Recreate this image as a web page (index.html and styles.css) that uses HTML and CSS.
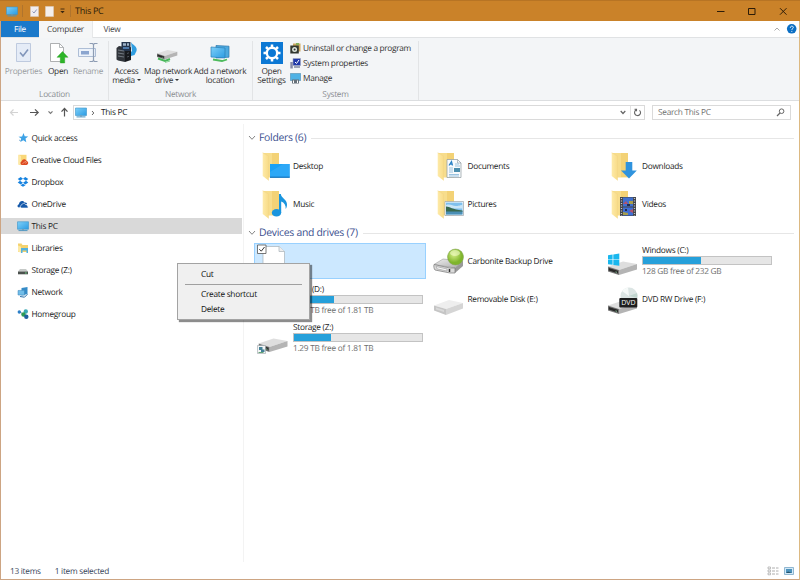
FILE: index.html
```html
<!DOCTYPE html>
<html>
  <head>
    <title>This PC</title>
    <meta charset="UTF-8">
    <link rel="stylesheet" href="styles.css">
  </head>

  <body>
    <!-- shared shapes -->
    <svg class="defs" width="0" height="0">
      <defs>
        <linearGradient id="yellow"><stop offset="0" stop-color="#feeaa8"/><stop offset="1" stop-color="#f8dc88"/></linearGradient>
        <linearGradient id="screen" x2="1" y2="1"><stop offset="0" stop-color="#7fd0f8"/><stop offset="1" stop-color="#2a9be3"/></linearGradient>
        <linearGradient id="metal" x2="1" y2="1"><stop offset="0" stop-color="#eeeeee"/><stop offset="1" stop-color="#a9a9a9"/></linearGradient>
        <radialGradient id="green" cx=".4" cy=".35"><stop offset="0" stop-color="#d5ee85"/><stop offset="1" stop-color="#7fb52c"/></radialGradient>
      </defs>
      <symbol id="pc" viewBox="0 0 12 10">
        <path d="M.5.5h11v7.500H.5z" fill="url(#screen)" stroke="#3a93c9" stroke-width=".6"/>
        <path d="M5 8h2v1H5z" fill="#7a98aa"/>
        <path d="M1.500 9.400h9" stroke="#4a94c0" stroke-width="1"/>
      </symbol>
      <symbol id="folder" viewBox="0 0 18 29">
        <path d="M1 1h16v24.500H5z" fill="#f7dd8c"/>
        <path d="M10 1h7v24h-7z" fill="#f3d276"/>
        <path d="M.7.7 6.500 4v24.500L.7 24z" fill="url(#yellow)"/>
        <path d="M.7.7 6.500 4v24.500" fill="none" stroke="#f3d584" stroke-width=".5"/>
      </symbol>
      <symbol id="drive" viewBox="0 0 30 14">
        <path d="M0 5.500 15 .5l14 2.500L11 9z" fill="#dedede"/>
        <path d="M11 9 29 3V8.500L11 14z" fill="#b4b4b4"/>
        <path d="M0 5.500 11 9v5L0 10.500z" fill="#777"/>
        <path d="M.8 7 10 9.800v2.700L.8 9.600z" fill="#292929"/>
        <path d="M7.500 10.900l1.500.5" stroke="#8dd3a0" stroke-width=".8"/>
      </symbol>
    </svg>

    <div class="window">
      <div class="titlebar">
        <svg class="title-pc" width="12" height="11"><use href="#pc" width="12" height="11"/></svg>
        <span class="title-sep"></span>
        <svg class="title-page" width="9" height="11" viewBox="0 0 9 11"><path d="M.5.5h8v10h-8z" fill="#f0edf0" stroke="#d8c9bd" stroke-width=".6"/><path d="M2.500 5.500 4 7l2.700-3.500" fill="none" stroke="#8a94b8"/></svg>
        <svg class="title-page" width="9" height="11" viewBox="0 0 9 11"><path d="M.5.5h8v10h-8z" fill="#f4efec" stroke="#dccdc0" stroke-width=".6"/></svg>
        <svg class="title-more" width="5" height="6" viewBox="0 0 5 6"><path d="M.5 1h4" stroke="#3a2710" stroke-width=".9"/><path d="M.3 3h4.400L2.500 5.300z" fill="#3a2710"/></svg>
        <span class="title-sep"></span>
        <span class="title-text">This PC</span>
        <svg class="win-buttons" width="80" height="21" viewBox="0 0 80 21" fill="none" stroke="#2d1c08"><path d="M7 10.500h7.500"/><path d="M38.500 7.500h6.500v6h-6.500z"/><path d="M70 7.200l6.500 6.500M76.500 7.200 70 13.700"/></svg>
      </div>

      <div class="tabs">
        <div class="tab file">File</div>
        <div class="tab active">Computer</div>
        <div class="tab view">View</div>
        <svg class="tab-tools" width="26" height="16" viewBox="0 0 26 16"><path d="M3.500 9.500 6 7l2.500 2.500" fill="none" stroke="#aaa"/><circle cx="20.700" cy="7.800" r="4.800" fill="#0b6fc4"/><path d="M19.300 6.800c0-2.200 3-2.200 3-.3 0 1.200-1.500 1.100-1.500 2.400M20.800 9.900v1" fill="none" stroke="#fff" stroke-width=".9"/></svg>
      </div>

      <div class="ribbon">
        <div class="group location">
          <div class="buttons">
            <div class="button properties disabled">
              <svg width="22" height="24" viewBox="0 0 22 24"><path d="M3.500 2.500h14v18h-14z" fill="#e5ecf7" stroke="#b3c0d8" stroke-width=".8"/><path d="M7 11.500l3 3.500 5-6.500" fill="none" stroke="#8095ba" stroke-width="1.600"/></svg>
              Properties
            </div>
            <div class="button open">
              <svg width="22" height="24" viewBox="0 0 22 24"><path d="M3.500 2.500h9l4 4v14h-13z" fill="#fff" stroke="#9a9da0" stroke-width=".8"/><path d="M12.500 2.500v4h4" fill="none" stroke="#9a9da0" stroke-width=".7"/><path d="M15.500 10.500l5.500 5.800h-3.300V22h-4.400v-5.700H10z" fill="#2db528" stroke="#209a1d" stroke-width=".4"/></svg>
              Open
            </div>
            <div class="button rename disabled">
              <svg width="22" height="24" viewBox="0 0 22 24" fill="none"><path d="M1.500 7.500h17v8h-17z" fill="#edf3fb" stroke="#aebed6"/><path d="M4 10h8v3.500H4z" fill="#8ba5cf"/><path d="M12.500 2.500h3l1 1 1-1h3M16.500 3.500v16M12.500 20.500h3l1-1 1 1h3" stroke="#8e9db4" stroke-width="1.200"/></svg>
              Rename
            </div>
          </div>
          <div class="group-name">Location</div>
        </div>
        <div class="group network">
          <div class="buttons">
            <div class="button media">
              <svg width="24" height="24" viewBox="0 0 24 24"><path d="M16 1c1 3 7 4 5.500 9l-2 4-3.500 1-2-2 3-3z" fill="#2f9de0"/><path d="M1.500 7 4 5l6 1v15l-7-1.500-1.500-1z" fill="#30343a"/><path d="M10 8l6-2v13l-6 2z" fill="#17191d"/><path d="M6.500 1h9v9h-9z" fill="#26364d"/><path d="M8 2.200h3v2.500H8zM12 2.200h2v2.500h-2z" fill="#a0b4c8"/><path d="M8 6h6v2H8z" fill="#4f79a8"/><path d="M3 9l6 1M3 12l6 1M3 15l6 1" stroke="#8e969f" stroke-width=".7"/><path d="M12 12.500l2-.7M12 16l2-.7" stroke="#4e545c"/></svg>
              Access<br>media <i class="arrow"></i>
            </div>
            <div class="button map">
              <svg width="24" height="24" viewBox="0 0 24 24"><use href="#drive" x="2" y="8" width="21" height="11"/><path d="M3 17.500l7 2.500 5-2" fill="none" stroke="#48b75a" stroke-width="2"/><path d="M10 21.500l5-1.500" stroke="#8bd596"/></svg>
              Map network<br>drive <i class="arrow"></i>
            </div>
            <div class="button add">
              <svg width="24" height="24" viewBox="0 0 24 24"><path d="M8 4.500l13 .7v11L8 17z" fill="#4ca9df" stroke="#2976ab" stroke-width=".7"/><path d="M3 6l14 1v10L3 16z" fill="url(#screen)" stroke="#2b80b6" stroke-width=".7"/><path d="M5 18.500l9 1.500 5-1.500" fill="none" stroke="#4dbb5d" stroke-width="1.800"/></svg>
              Add a network<br>location
            </div>
          </div>
          <div class="group-name">Network</div>
        </div>
        <div class="group system">
          <div class="buttons">
            <div class="button settings">
              <svg width="24" height="24" viewBox="0 0 24 24"><path d="M1 1h22v22H1z" fill="#0c78d4"/><circle cx="12" cy="12" r="5.200" fill="none" stroke="#fff" stroke-width="2.400"/><path d="M12 3.500v3M12 17.500v3M3.500 12h3M17.500 12h3M6 6l2.200 2.200M15.800 15.800 18 18M18 6l-2.200 2.200M8.200 15.800 6 18" stroke="#fff" stroke-width="2.500"/></svg>
              Open<br>Settings
            </div>
            <div class="links">
              <div class="link">
                <svg width="11" height="11" viewBox="0 0 11 11"><path d="M3 .5h7.500v8H3z" fill="#cba75e"/><path d="M6 0h3v2H6z" fill="#85af59"/><path d="M.3 2.500h8.500v8H.3z" fill="#32372f"/><circle cx="4.600" cy="6.500" r="2.500" fill="#dde5dc"/><circle cx="4.600" cy="6.500" r="1" fill="#333"/></svg>
                Uninstall or change a program
              </div>
              <div class="link">
                <svg width="11" height="11" viewBox="0 0 11 11"><path d="M3 .5h7.500v7H3z" fill="#2038a8" stroke="#9ea5bd" stroke-width=".6"/><path d="M5 4l1.500 1.500L9 2" fill="none" stroke="#fff"/><path d="M.3 4h2.500v6.500H.3z" fill="#8589a8"/><path d="M4 9h6" stroke="#7f87a0" stroke-width="1.500"/></svg>
                System properties
              </div>
              <div class="link">
                <svg width="11" height="11" viewBox="0 0 11 11"><path d="M.3.5h10.400v7H.3z" fill="#4fb2e5" stroke="#528bad" stroke-width=".6"/><path d="M2 6.500h7v4H2z" fill="#66717a"/><path d="M3.500 7.500v2.500M7.500 7.500v2.500" stroke="#fff"/></svg>
                Manage
              </div>
            </div>
          </div>
          <div class="group-name">System</div>
        </div>
      </div>

      <div class="address-row">
        <svg class="arrows" width="72" height="22" viewBox="0 0 72 22" fill="none" stroke="#555" stroke-width="1.200"><path d="M17 11.500H9.500M12.500 8.500l-3 3 3 3" stroke="#d3d3d3"/><path d="M29 11.500h8M34 8.300l3.200 3.200-3.200 3.200"/><path d="M47.500 10.300l2 2 2-2" stroke="#777"/><path d="M63.500 15.500v-8M60.500 10.700l3-3.200 3 3.200"/></svg>
        <div class="address">
          <svg width="12" height="11"><use href="#pc" width="12" height="11"/></svg>
          <svg class="crumb" width="4" height="6" viewBox="0 0 4 6"><path d="M1 1l1.800 2L1 5" fill="none" stroke="#666"/></svg>
          <span>This PC</span>
          <svg class="drop" width="6" height="5" viewBox="0 0 6 5"><path d="M.7 1 3 3.500 5.300 1" fill="none" stroke="#666" stroke-width="1.200"/></svg>
          <div class="refresh"><svg width="9" height="9" viewBox="0 0 9 9"><path d="M3 2A3 3 0 1 0 6.500 2.300M1.500 1.300h2v2" fill="none" stroke="#666" stroke-width="1.100"/></svg></div>
        </div>
        <div class="search">
          <span>Search This PC</span>
          <svg width="9" height="9" viewBox="0 0 9 9" fill="none" stroke="#666"><circle cx="5.600" cy="3.200" r="2.300"/><path d="M4 5 1 8" stroke-width="1.300"/></svg>
        </div>
      </div>

      <div class="body">
        <div class="nav">
          <div class="nav-item"><svg width="12" height="12" viewBox="0 0 12 12"><path d="M6.500 1l1.200 3.300 3.500.1-2.700 2.200.8 3.700-3-2-3 1.800.9-3.500L1.500 4.700l3.600-.3z" fill="#3da2e6"/><path d="M2 8l2 1" stroke="#8bb6d6"/></svg>Quick access</div>
          <div class="nav-item"><svg width="12" height="12" viewBox="0 0 12 12"><path d="M1.500.8h8v10h-8z" fill="#f9d778"/><path d="M1.500.8 4 2v9.500L1.500 10z" fill="#fde9a6"/><path d="M5 11a2 2 0 0 1-.3-3.800 2.700 2.700 0 0 1 5-.3A2.100 2.100 0 0 1 9.500 11z" fill="#dd4a21"/><path d="M5.500 9.500c1.500 0 1.500-2 3-2 1 0 1 1.800 0 1.800" fill="none" stroke="#f9ba9d" stroke-width=".7"/></svg>Creative Cloud Files</div>
          <div class="nav-item"><svg width="12" height="12" viewBox="0 0 12 12" fill="#1783e0"><path d="M3.700 1 6 2.800 3 4.800.7 3zM8.300 1 6 2.800l3 2L11.300 3zM.7 6.500 3 4.800l3 2-2.300 1.700zM11.300 6.500 9 4.800l-3 2 2.300 1.700zM3.500 9.200 6 7.700l2.500 1.500L6 10.800z"/></svg>Dropbox</div>
          <div class="nav-item"><svg width="12" height="12" viewBox="0 0 12 12"><path d="M2 9.500C0 9.500 0 6.600 2 6.300c-.2-3 3.800-4.500 5.500-1.800 2-.5 2.600.8 2.600 1.500z" fill="#1559aa"/><path d="M4.500 10c-1.800-.6-1.500-2.700.2-3 .5-2 3.200-2.200 4-.3 1.500-.2 1.800 1 1.600 1.300 1.300.3 1 2 0 2z" fill="#1559aa" stroke="#fff" stroke-width=".6"/></svg>OneDrive</div>
          <div class="nav-item selected"><svg width="12" height="12"><use href="#pc" y="1" width="12" height="10.500"/></svg>This PC</div>
          <div class="nav-item"><svg width="12" height="12" viewBox="0 0 12 12"><path d="M1 1.500h3.500l1 1.500H11v7H1z" fill="#f4d26e"/><path d="M1 3.500l3 1.200v6L1 9.500z" fill="#fce9a5"/><path d="M4 6h7v5H9.500V8.500h-4V11H4z" fill="#53b2df"/></svg>Libraries</div>
          <div class="nav-item"><svg width="12" height="12" viewBox="0 0 12 12"><path d="M3 5h6l2 2.500H1z" fill="#c5c9c7"/><path d="M1 7.500h10v2.800H1z" fill="#4b514d"/><path d="M8 9h1.800" stroke="#6ad082"/></svg>Storage (Z:)</div>
          <div class="nav-item"><svg width="12" height="12" viewBox="0 0 12 12"><path d="M4.500 2l6-1v7l-6 1.500z" fill="#358bc7"/><path d="M1 4.500l6.500-.3v5L1 9z" fill="#71bde8" stroke="#3883b8" stroke-width=".5"/><path d="M3 10.500l4.500.7 3-3" fill="none" stroke="#2b6fa7"/></svg>Network</div>
          <div class="nav-item"><svg width="12" height="12" viewBox="0 0 12 12"><path d="M2.500 4l4 2L9 3.500" fill="none" stroke="#789"/><circle cx="2.300" cy="4" r="1.700" fill="#2c7fc8"/><circle cx="8.800" cy="3.500" r="2.200" fill="#3ba9b4"/><circle cx="6.500" cy="6.500" r="2.200" fill="#2c9a55"/><circle cx="9.300" cy="8.700" r="2.200" fill="#1d5f9f"/></svg>Homegroup</div>
        </div>

        <div class="content">
          <div class="heading"><svg width="8" height="6" viewBox="0 0 8 6"><path d="M1 1l3 3.300L7 1" fill="none" stroke="#777" stroke-width=".9"/></svg>Folders (6)<span class="rule"></span></div>
          <div class="tiles folders">
            <div class="tile">
              <svg width="39" height="36" viewBox="0 0 39 36"><use href="#folder" x="8" y="4" width="18" height="29"/><path d="M16 16h19.700v13.500H16z" fill="#1ba1f5"/><path d="M16 24l13-8h6.700v13.500H16z" fill="#3aaef8" opacity=".6"/><path d="M16 29.200h19.700" stroke="#0d69b4"/></svg>
              <div class="name">Desktop</div>
            </div>
            <div class="tile">
              <svg width="39" height="36" viewBox="0 0 39 36"><use href="#folder" x="8" y="4" width="18" height="29"/><path d="M18 11.500h10.500L32 15v14.500H18z" fill="#f8fafc" stroke="#8e999f" stroke-width=".7"/><path d="M28.500 11.500V15H32" fill="none" stroke="#8e999f" stroke-width=".6"/><path d="M20 17.500l2.500-4 1 4M21 16.200h2" fill="none" stroke="#2b82c6" stroke-width="1.200"/><path d="M20 20h4M20 22h4M20 24h4M20 26.500h10M20 28h10M26 16h4M26 18h5" stroke="#83b5d8" stroke-width=".8"/><path d="M25 20h6v4h-6z" fill="#4b8dac"/></svg>
              <div class="name">Documents</div>
            </div>
            <div class="tile">
              <svg width="39" height="36" viewBox="0 0 39 36"><use href="#folder" x="8" y="4" width="18" height="29"/><path d="M22.700 14h6.600v8.500h4.500L26 30.500l-8-8h4.700z" fill="#2f93de"/></svg>
              <div class="name">Downloads</div>
            </div>
            <div class="tile">
              <svg width="39" height="36" viewBox="0 0 39 36"><use href="#folder" x="8" y="4" width="18" height="29"/><ellipse cx="22.500" cy="26.800" rx="4.700" ry="3.700" fill="#1995df"/><path d="M25 8h1.800c.5 4 6.200 5.500 6.200 10.500 0 2-.7 3.500-1.300 4.500.3-4-1.500-6.500-4.500-7.500v11.500H25z" fill="#1995df"/></svg>
              <div class="name">Music</div>
            </div>
            <div class="tile">
              <svg width="39" height="36" viewBox="0 0 39 36"><use href="#folder" x="8" y="4" width="18" height="29"/><path d="M16 15.500h18.500v14H16z" fill="#fff" stroke="#9aa4ab" stroke-width=".7"/><path d="M17 16.500h16.500v12H17z" fill="#7fc0ee"/><path d="M17 19c5-1.500 6 1 10 1s4-1 6.500-1v3.500H17z" fill="#c9e5f7"/><path d="M17 20.500c4 0 6 3 16.500 4v1.500H17z" fill="#38694f"/><path d="M17 25.500h16.500v3H17z" fill="#4a8fb5"/></svg>
              <div class="name">Pictures</div>
            </div>
            <div class="tile">
              <svg width="39" height="36" viewBox="0 0 39 36"><use href="#folder" x="8" y="4" width="18" height="29"/><path d="M17 11h16v19H17z" fill="#43454b"/><path d="M20 11.500h10v9H20z" fill="#3f70d0"/><path d="M20 21.500h10v8H20z" fill="#3f6fd5"/><path d="M18.500 12v18M31.500 12v18" stroke="#c3c6c9" stroke-width="1.300" stroke-dasharray="1 1.500"/><path d="M20 18l3-3 2 3M26 25l4-2v4z" fill="#b5526a"/><path d="M26 15h4v3h-4zM20 26l5 1v2h-5z" fill="#a89f4c"/><path d="M24 18h3v2h-3zM22 23h2v2h-2z" fill="#222c50"/></svg>
              <div class="name">Videos</div>
            </div>
          </div>

          <div class="heading"><svg width="8" height="6" viewBox="0 0 8 6"><path d="M1 1l3 3.300L7 1" fill="none" stroke="#777" stroke-width=".9"/></svg>Devices and drives (7)<span class="rule"></span></div>
          <div class="tiles">
            <div class="tile selected">
              <svg width="39" height="34" viewBox="0 1 39 34"><path d="M8 3.500h16l5.500 5V35H8z" fill="#fff" stroke="#a8b2b9" stroke-width=".7"/><path d="M24 3.500v5h5.500" fill="#eee" stroke="#a8b2b9" stroke-width=".7"/><path d="M2.500 2h8.500v8.500H2.500z" fill="#fff" stroke="#555" stroke-width=".8"/><path d="M4.300 6.200l2 2L9.500 4" fill="none" stroke="#333"/></svg>
            </div>
            <div class="tile">
              <svg width="39" height="36" viewBox="0 0 39 36"><path d="M5 21.500 14 16l20 2-8 7z" fill="url(#metal)" stroke="#8b8b8b" stroke-width=".5"/><path d="M26 25l8-7v5l-8 7z" fill="#999"/><path d="M5 21.500 21 25h5v5h-5L6 27c-1-1-1.500-4-1-5.500z" fill="#dadada" stroke="#777" stroke-width=".7"/><path d="M7 23.500l11 2.500v2L8 25.800z" fill="#f8f8f8" stroke="#888" stroke-width=".5"/><path d="M20.500 26v3" stroke="#333" stroke-width="1.500"/><circle cx="26.500" cy="14" r="8" fill="url(#green)" stroke="#7f9c53" stroke-width=".5"/><ellipse cx="26" cy="10" rx="5" ry="3" fill="#f1fbc9" opacity=".6"/></svg>
              <div class="name">Carbonite Backup Drive</div>
            </div>
            <div class="tile">
              <svg width="39" height="36" viewBox="0 0 39 36"><use href="#drive" x="5" y="18" width="30" height="14"/><path d="M5 12.300l4.600-.7v4.800H5zM10.300 11.500l6-.9v5.800h-6zM5 17.100h4.600v4.700L5 21.200zM10.300 17.100h6v5.700l-6-.9z" fill="#19b7ee"/></svg>
              <div class="info">
                <div class="name">Windows (C:)</div>
                <div class="bar"><div class="fill" style="width: 45%"></div></div>
                <div class="free">128 GB free of 232 GB</div>
              </div>
            </div>
            <div class="tile">
              <svg width="39" height="36" viewBox="0 0 39 36"><use href="#drive" x="4" y="18" width="30" height="14"/></svg>
              <div class="info">
                <div class="name">Data (D:)</div>
                <div class="bar"><div class="fill" style="width: 31%"></div></div>
                <div class="free">1.24 TB free of 1.81 TB</div>
              </div>
            </div>
            <div class="tile">
              <svg width="39" height="36" viewBox="0 0 39 36"><path d="M5 23.500 20 18l14 3-17 6z" fill="#eeeeee"/><path d="M5 23.500 17 27v6L5 28.500z" fill="#c5c5c5"/><path d="M17 27l17-6v5.500L17 33z" fill="#d5d5d5"/><path d="M7 25.500l8 2.500v2l-8-2.500z" fill="#d9d9d9"/></svg>
              <div class="name">Removable Disk (E:)</div>
            </div>
            <div class="tile">
              <svg width="39" height="36" viewBox="0 0 39 36"><use href="#drive" x="5" y="18" width="30" height="14"/><circle cx="26" cy="14" r="8.500" fill="#dce5e4"/><path d="M26 14l-7-5a8.500 8.500 0 0 1 6-3.500z" fill="#f6faf9"/><path d="M26 14l8-3a8.500 8.500 0 0 1 .3 5z" fill="#c1d5cf"/><rect x="16.300" y="16" width="18" height="9.500" rx="1" fill="#1e1f20"/><text x="25.300" y="23.200" class="dvd">DVD</text></svg>
              <div class="name">DVD RW Drive (F:)</div>
            </div>
            <div class="tile">
              <svg width="39" height="36" viewBox="0 0 39 36"><use href="#drive" x="4.500" y="18" width="30" height="14"/><path d="M3.500 25.500h8v8h-8z" fill="#f3f5f6" stroke="#9ba3a8" stroke-width=".6"/><path d="M5 27h3.500v3H5zM7 29.500h3.500v2.500H7z" fill="#438197"/><path d="M4.500 32.500h5" stroke="#64a577"/></svg>
              <div class="info">
                <div class="name">Storage (Z:)</div>
                <div class="bar"><div class="fill" style="width: 29%"></div></div>
                <div class="free">1.29 TB free of 1.81 TB</div>
              </div>
            </div>
          </div>
        </div>
      </div>

      <div class="status">
        <span>13 items</span>
        <span>1 item selected</span>
        <svg width="28" height="10" viewBox="0 0 28 10"><path d="M1 1h2.500v1.800H1zM1 4h2.500v1.800H1zM1 7h2.500v1.800H1z" fill="none" stroke="#999" stroke-width=".6"/><path d="M5 2h3M9 2h2.500M5 5h3M9 5h2.500M5 8h3M9 8h2.500" stroke="#999" stroke-width=".8"/><path d="M17.500 1.500h9v7h-9z" fill="#d4e9f7" stroke="#79a7c6" stroke-width=".8"/><path d="M19 3h6v4h-6z" fill="#4c93bd"/><path d="M19 7l2-1.500L25 7z" fill="#245169"/></svg>
      </div>

      <div class="menu">
        <div class="menu-item">Cut</div>
        <div class="menu-line"></div>
        <div class="menu-item">Create shortcut</div>
        <div class="menu-item">Delete</div>
      </div>
    </div>
  </body>
</html>
```
FILE: styles.css
```css
* {
  box-sizing: border-box;
}

body {
  margin: 0;
  font-family: "Open Sans", "Noto Sans", sans-serif;
  font-size: 8.3px;
  letter-spacing: -0.28px;
  line-height: 11px;
  color: #1c1c1c;
  white-space: nowrap;
  overflow: hidden;
  text-rendering: geometricPrecision;
}

svg {
  display: block;
  flex: none;
}

.defs {
  position: absolute;
}

.window {
  position: relative;
  display: flex;
  flex-direction: column;
  width: 800px;
  height: 580px;
  background-color: #fff;
  border: 1px solid #cda583;
  border-top: none;
  border-right-color: #dcb982;
}

/* title bar */
.titlebar {
  display: flex;
  align-items: center;
  height: 21px;
  margin: 0 -1px;
  padding-left: 6px;
  background-color: #ca8229;
  border-top: 1px solid #b77424;
}

.title-sep {
  width: 1px;
  height: 12px;
  margin: 0 7px 0 4px;
  background-color: #b0742d;
}

.title-page {
  margin-right: 6px;
}

.title-more {
  margin-right: 1px;
}

.title-text {
  margin-left: -3px;
  margin-top: -1px;
  font-size: 9px;
  color: #2d1d0a;
}

.win-buttons {
  margin-left: auto;
  margin-right: 10px;
}

/* tabs */
.tabs {
  display: flex;
  height: 16px;
}

.tab {
  height: 17px;
  line-height: 17px;
  text-align: center;
  color: #444;
}

.file {
  width: 38px;
  height: 16px;
  color: #fff;
  background-color: #1a79ca;
}

.active {
  width: 54px;
  background-color: #f5f6f7;
  position: relative;
  z-index: 1;
  border-right: 1px solid #e7e8e9;
}

.view {
  width: 38px;
}

.tab-tools {
  margin-left: auto;
  margin-right: 2px;
}

/* ribbon */
.ribbon {
  display: flex;
  height: 64px;
  padding: 3px 0 0;
  background-color: #f3f5f7;
  border-top: 1px solid #e0e2e4;
  border-bottom: 1px solid #dcdee0;
}

.group {
  display: flex;
  flex-direction: column;
  justify-content: space-between;
  border-right: 1px solid #e2e4e6;
}

.location {
  width: 108px;
}

.network {
  width: 144px;
}

.system {
  width: 166px;
}

.buttons {
  display: flex;
  color: #333;
}

.button {
  display: flow-root;
  text-align: center;
  line-height: 9px;
}

.button svg {
  margin: 0 auto 2px;
}

.disabled {
  color: #9a9da2;
}

.properties {
  width: 45px;
}

.open {
  width: 24px;
}

.rename {
  width: 36px;
}

.media {
  width: 35px;
}

.map {
  width: 46px;
}

.add {
  width: 60px;
}

.settings {
  width: 37px;
}

.arrow {
  display: inline-block;
  border: 2px solid transparent;
  border-top-color: #333;
  border-bottom: none;
  vertical-align: 2px;
}

.links {
  display: flex;
  flex-direction: column;
  gap: 4px;
  padding-top: 2px;
}

.link {
  display: flex;
  align-items: center;
  gap: 2px;
  height: 11px;
  letter-spacing: -0.32px;
}

.group-name {
  text-align: center;
  color: #8b8e92;
}

/* address row */
.address-row {
  display: flex;
  height: 23px;
}

.address {
  display: flex;
  align-items: center;
  width: 572px;
  height: 15px;
  margin-top: 4px;
  padding-left: 1px;
  border: 1px solid #dadada;
}

.address span {
  margin-top: -1px;
}

.crumb {
  margin: 0 6px 0 4px;
}

.drop {
  margin-left: auto;
  margin-right: 4px;
}

.refresh {
  padding: 2px;
  border-left: 1px solid #e2e2e2;
}

.search {
  display: flex;
  align-items: center;
  justify-content: space-between;
  width: 139px;
  height: 15px;
  margin: 4px 0 0 7px;
  padding: 0 5px;
  border: 1px solid #dadada;
  color: #707070;
}

/* navigation pane */
.body {
  display: flex;
  flex: 1;
}

.nav {
  display: flex;
  flex-direction: column;
  gap: 6px;
  width: 243px;
  padding: 6px 1px 0 0;
  border-right: 1px solid #f3f3f3;
}

.nav-item {
  display: flex;
  align-items: center;
  gap: 3px;
  height: 16px;
  padding-left: 15.5px;
}

.nav .selected {
  background-color: #d9d9d9;
}

/* file list */
.content {
  flex: 1;
  padding: 4px 5px 0 4px;
}

.heading {
  display: flex;
  align-items: center;
  gap: 3px;
  height: 20px;
  font-size: 10.4px;
  color: #3b4f8f;
}

.rule {
  flex: 1;
  height: 1px;
  margin-left: 2px;
  background-color: #e6e6e6;
}

.tiles {
  display: grid;
  grid-template-columns: 172px 172px 172px;
  grid-auto-rows: 36px;
  gap: 2.5px;
  padding: 0 0 0 6px;
}

.folders {
  row-gap: 2px;
  padding-bottom: 1px;
}

.tile {
  display: flex;
  align-items: center;
}

.tile.selected {
  background-color: #cce8ff;
  border: 1px solid #99d1ff;
}

.info {
  width: 130px;
}

.bar {
  height: 9px;
  margin: 0 0 1px;
  background-color: #e6e6e6;
  border: 1px solid #c3c3c3;
}

.fill {
  height: 100%;
  background-color: #26a0da;
}

.free {
  color: #6e6e6e;
}

.dvd {
  font-size: 7px;
  letter-spacing: 0;
  fill: #fff;
  text-anchor: middle;
}

/* status bar */
.status {
  display: flex;
  align-items: center;
  gap: 14px;
  height: 17px;
  padding: 0 4px 0 9px;
  color: #38465a;
}

.status span {
  padding-top: 2px;
}

.status svg {
  margin-left: auto;
}

/* context menu */
.menu {
  position: absolute;
  left: 176px;
  top: 263px;
  width: 133px;
  height: 57px;
  padding: 3px 7px 0;
  background-color: #f0f0f0;
  border: 1px solid #a3a3a3;
  box-shadow: 2px 2px 1px rgba(0, 0, 0, 0.45);
}

.menu-item {
  height: 15px;
  padding-left: 16px;
  line-height: 15px;
  color: #111;
}

.menu-line {
  height: 1px;
  margin: 2px 0;
  background-color: #a0a0a0;
}
```
